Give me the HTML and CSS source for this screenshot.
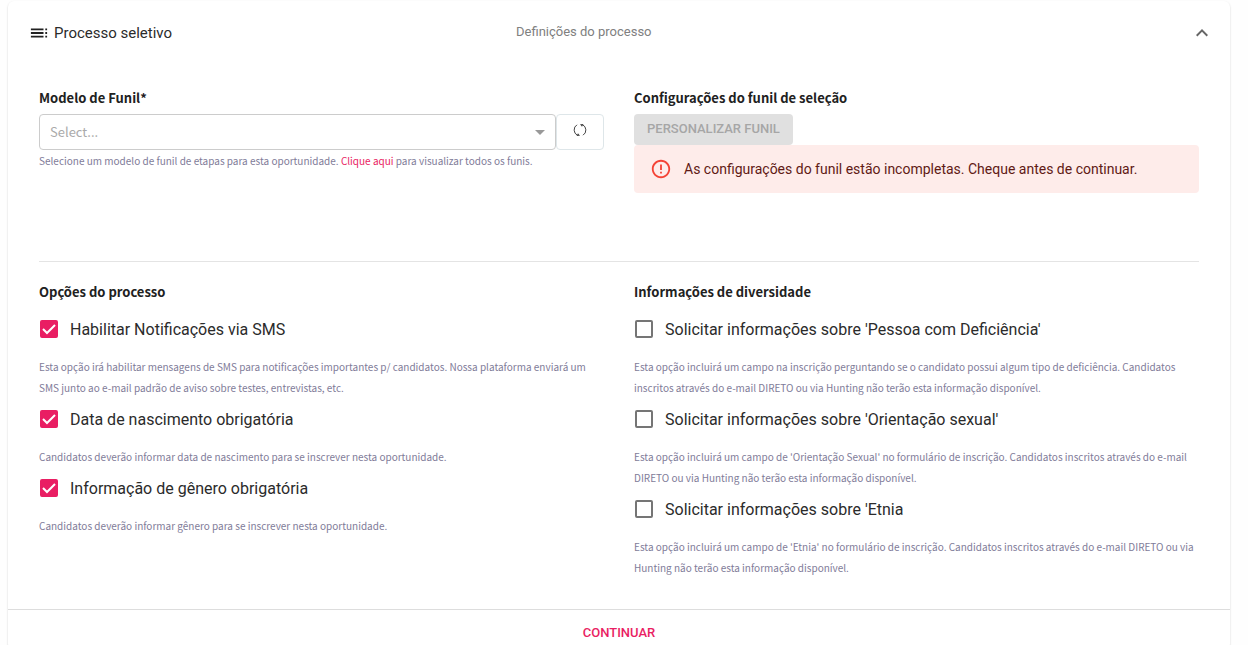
FILE: index.html
```html
<!DOCTYPE html>
<html lang="pt-BR">
<head>
<meta charset="utf-8">
<meta name="viewport" content="width=device-width, initial-scale=1">
<title>Processo seletivo</title>
<link rel="stylesheet" href="styles.css">
</head>
<body>
<main class="card">
  <header class="card-header">
    <h1 class="title">
      <svg class="title-icon" viewBox="2 2 20 20" aria-hidden="true"><path d="M3 9h14V7H3v2zm0 4h14v-2H3v2zm0 4h14v-2H3v2zm16 0h2v-2h-2v2zm0-10v2h2V7h-2zm0 6h2v-2h-2v2z"/></svg>
      Processo seletivo
    </h1>
    <p class="subtitle">Definições do processo</p>
    <button class="collapse" type="button" aria-label="Recolher">
      <svg viewBox="0 0 24 24" aria-hidden="true"><path d="M12 8l-6 6 1.41 1.41L12 10.83l4.59 4.58L18 14z"/></svg>
    </button>
  </header>

  <div class="card-body">
    <section class="columns funnel">
      <div>
        <label class="heading" for="funil">Modelo de Funil*</label>
        <div class="picker">
          <div class="select-wrap">
            <select class="select" id="funil"><option>Select...</option></select>
            <svg class="caret" viewBox="0 0 10 5" aria-hidden="true"><path d="M0 0h10L5 5z"/></svg>
          </div>
          <button class="refresh" type="button" aria-label="Atualizar">
            <svg viewBox="0 0 14 14" aria-hidden="true"><path d="M4.500 12.300A6 6 0 0 1 4 1.800M9.500 1.700A6 6 0 0 1 10 12.200"/><path class="arrow" d="M10.500 1L7 1.200L9 3.800zM3.500 13L7 12.800L5 10.200z"/></svg>
          </button>
        </div>
        <p class="hint">Selecione um modelo de funil de etapas para esta oportunidade. <a class="link" href="#">Clique aqui</a> para visualizar todos os funis.</p>
      </div>
      <div>
        <h2 class="heading">Configurações do funil de seleção</h2>
        <button class="customize" type="button" disabled>PERSONALIZAR FUNIL</button>
        <div class="alert" role="alert">
          <svg class="alert-icon" viewBox="0 0 24 24" aria-hidden="true"><path d="M11 15h2v2h-2zm0-8h2v6h-2zm.99-5C6.470 2 2 6.480 2 12s4.470 10 9.990 10C17.520 22 22 17.520 22 12S17.520 2 11.990 2zM12 20c-4.420 0-8-3.580-8-8s3.580-8 8-8 8 3.580 8 8-3.580 8-8 8z"/></svg>
          <span>As configurações do funil estão incompletas. Cheque antes de continuar.</span>
        </div>
      </div>
    </section>

    <section class="columns options">
      <div>
        <h2 class="heading">Opções do processo</h2>
        <label class="option"><span class="tick"><input class="box" type="checkbox" checked><svg class="mark" viewBox="0 0 18 18" aria-hidden="true"><path d="M3 9l4 4 8-8"/></svg></span>Habilitar Notificações via SMS</label>
        <p class="help">Esta opção irá habilitar mensagens de SMS para notificações importantes p/ candidatos. Nossa plataforma enviará um SMS junto ao e-mail padrão de aviso sobre testes, entrevistas, etc.</p>
        <label class="option"><span class="tick"><input class="box" type="checkbox" checked><svg class="mark" viewBox="0 0 18 18" aria-hidden="true"><path d="M3 9l4 4 8-8"/></svg></span>Data de nascimento obrigatória</label>
        <p class="help">Candidatos deverão informar data de nascimento para se inscrever nesta oportunidade.</p>
        <label class="option"><span class="tick"><input class="box" type="checkbox" checked><svg class="mark" viewBox="0 0 18 18" aria-hidden="true"><path d="M3 9l4 4 8-8"/></svg></span>Informação de gênero obrigatória</label>
        <p class="help">Candidatos deverão informar gênero para se inscrever nesta oportunidade.</p>
      </div>
      <div>
        <h2 class="heading">Informações de diversidade</h2>
        <label class="option"><span class="tick"><input class="box" type="checkbox"></span>Solicitar informações sobre 'Pessoa com Deficiência'</label>
        <p class="help">Esta opção incluirá um campo na inscrição perguntando se o candidato possui algum tipo de deficiência. Candidatos inscritos através do e-mail DIRETO ou via Hunting não terão esta informação disponível.</p>
        <label class="option"><span class="tick"><input class="box" type="checkbox"></span>Solicitar informações sobre 'Orientação sexual'</label>
        <p class="help">Esta opção incluirá um campo de 'Orientação Sexual' no formulário de inscrição. Candidatos inscritos através do e-mail DIRETO ou via Hunting não terão esta informação disponível.</p>
        <label class="option"><span class="tick"><input class="box" type="checkbox"></span>Solicitar informações sobre 'Etnia</label>
        <p class="help">Esta opção incluirá um campo de 'Etnia' no formulário de inscrição. Candidatos inscritos através do e-mail DIRETO ou via Hunting não terão esta informação disponível.</p>
      </div>
    </section>
  </div>

  <footer class="card-footer">
    <button class="continue" type="button">CONTINUAR</button>
  </footer>
</main>
</body>
</html>
```
FILE: styles.css
```css
* { box-sizing: border-box; }

html { overflow: hidden; }

body {
  margin: 0;
  padding: 1px 18px 0 8px;
  background: #fefefe;
  color: #2b2b2b;
  font-family: Roboto, sans-serif;
  font-size: 16px;
}

h1, h2, p { margin: 0; font-weight: 400; }

button, select, input { font: inherit; margin: 0; }

.card {
  background: #fff;
  border-radius: 6px;
  box-shadow: 0 1px 2px rgba(0, 0, 0, 0.2);
}

.card-header {
  display: grid;
  grid-template-columns: 485px 1fr 24px;
  align-items: center;
  height: 64px;
  padding: 0 16px 0 22px;
}

.title {
  display: flex;
  align-items: center;
  gap: 6px;
  font-size: 15px;
}

.title-icon { width: 18px; height: 18px; fill: #212121; }

.subtitle {
  padding: 0 0 3px 1px;
  font-size: 13px;
  color: #808080;
}

.collapse {
  width: 24px;
  height: 24px;
  padding: 0;
  border: 0;
  background: none;
  fill: #666;
}

.card-body { padding: 20px 31px 31px; }

.columns {
  display: grid;
  grid-template-columns: 1fr 1fr;
  column-gap: 30px;
}

.funnel {
  min-height: 177px;
  border-bottom: 1px solid #e4e4e4;
}

.options { padding-top: 17px; }

.heading {
  display: block;
  height: 29px;
  color: #212121;
  font: 700 13px/26px "Noto Sans CJK SC", sans-serif;
}

.picker { display: flex; }

.select-wrap { position: relative; flex: 1; }

.select {
  display: block;
  appearance: none;
  width: 100%;
  height: 36px;
  padding: 0 10px 2px;
  border: 1px solid #ccc;
  border-radius: 4px;
  background: #fff;
  color: #aaa;
  font: 13px "Noto Sans CJK SC", sans-serif;
}

.caret {
  position: absolute;
  right: 11px;
  top: 16px;
  width: 10px;
  height: 5px;
  fill: #999;
  pointer-events: none;
}

.refresh {
  display: flex;
  justify-content: center;
  width: 48px;
  height: 36px;
  padding: 8px 0 0;
  border: 1px solid #dee6e9;
  border-radius: 4px;
  background: #fff;
}

.refresh svg {
  width: 14px;
  height: 14px;
  fill: none;
  stroke: #444;
}

.refresh .arrow { fill: #444; stroke: none; }

.hint, .help {
  color: #7f7c99;
  font: 10px/22px "Noto Sans CJK SC", sans-serif;
}

.link { color: #e91e63; text-decoration: none; }

.customize {
  display: block;
  height: 31px;
  padding: 0 13px 2px;
  border: 0;
  border-radius: 4px;
  background: #e0e0e0;
  color: #a6a6a6;
  font-size: 13px;
  font-weight: 500;
}

.alert {
  display: flex;
  align-items: center;
  gap: 12px;
  min-height: 48px;
  padding: 0 16px;
  border-radius: 4px;
  background: #feecea;
  color: #611a15;
  font-size: 14px;
}

.alert-icon { width: 22px; height: 22px; fill: #f44336; }

.option {
  display: flex;
  align-items: center;
  gap: 12px;
  height: 42px;
}

.tick { position: relative; width: 19px; height: 18px; padding-left: 1px; }

.box {
  display: block;
  appearance: none;
  width: 18px;
  height: 18px;
  border: 2px solid #757575;
  border-radius: 2px;
  background: #fff;
}

.box:checked { border-color: #e91e63; background: #e91e63; }

.mark {
  position: absolute;
  left: 1px;
  top: 0;
  width: 18px;
  height: 18px;
  fill: none;
  stroke: #fff;
  stroke-width: 2;
  pointer-events: none;
}

.help { padding-top: 6px; line-height: 21px; }

.card-footer {
  display: flex;
  justify-content: center;
  padding-top: 4px;
  border-top: 1px solid #ddd;
}

.continue {
  height: 36px;
  padding: 0 8px;
  border: 0;
  background: none;
  color: #e91e63;
  font-size: 13px;
  font-weight: 500;
}
```
